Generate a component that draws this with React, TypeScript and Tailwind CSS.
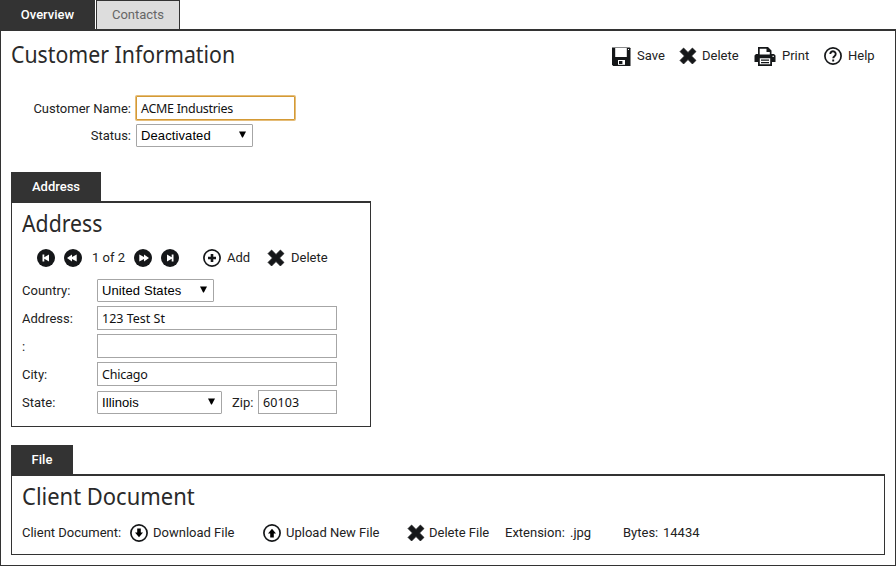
import type { ReactNode } from "react";

const head = "font-['Noto_Sans',sans-serif] text-[24px] leading-[30px] tracking-normal text-[#2a2a2a] whitespace-nowrap origin-left";

function Cross() {
  return (
    <svg width="18" height="18" viewBox="0 0 18 18" className="shrink-0">
      <path d="M4.6 1 9 5.4 13.4 1 17 4.6 12.6 9 17 13.4 13.4 17 9 12.6 4.6 17 1 13.4 5.4 9 1 4.6Z" fill="#151719" stroke="#151719" strokeWidth=".7" strokeLinejoin="round" />
    </svg>
  );
}

function Ring({ children }: { children: ReactNode }) {
  return (
    <svg width="18" height="18" viewBox="0 0 18 18" className="shrink-0">
      <circle cx="9" cy="9" r="8.1" fill="#fff" stroke="#151719" strokeWidth="1.7" />
      {children}
    </svg>
  );
}

function Nav({ d }: { d: string }) {
  return (
    <svg width="18" height="18" viewBox="0 0 18 18" className="shrink-0">
      <circle cx="9" cy="9" r="9" fill="#151719" />
      <path d={d} fill="#fff" />
    </svg>
  );
}

function SaveIcon() {
  return (
    <svg width="19" height="19" viewBox="0 0 19 19" className="shrink-0">
      <path d="M0 .5h17.8l.7.7V19H1.2L0 17.8Z" fill="#151719" />
      <path d="M3.2 1h11.6v9H3.2Z" fill="#fff" />
      <path d="M6 13h7v4.8H6Z" fill="#fff" />
      <path d="M7 14h3.4v3H7Z" fill="#151719" />
      <path d="M16 2h1v1h-1Z" fill="#fff" />
    </svg>
  );
}

function PrintIcon() {
  return (
    <svg width="22" height="19" viewBox="0 0 22 19" className="shrink-0">
      <path d="M4 0h10l3.5 3.5V7H20l1.5 1.5V15H18v4H4v-4H.5V8.5L2 7h2Z" fill="#151719" />
      <path d="M5.7 1.7H12.5V5h3.3v2.5H5.7ZM5.8 11.3h10.4v6H5.8Z" fill="#fff" />
      <path d="M7 12.6h8v1.2H7ZM7 15h8v1.2H7Z" fill="#151719" />
      <path d="M18.5 8.8h1.3V10h-1.3Z" fill="#fff" />
    </svg>
  );
}

function Select({ value, className }: { value: string; className: string }) {
  return (
    <div className={"flex h-[23px] items-center justify-between rounded-[1px] border border-[#a6a6a6] bg-white pl-1 pr-[6px] font-['Liberation_Sans',sans-serif] text-[13px] leading-[15px] text-black " + className}>
      <span>{value}</span>
      <svg width="7" height="7" viewBox="0 0 7 7" className="mb-[2px]"><path d="M0 .5h7L3.9 6.5h-.8Z" fill="#000" /></svg>
    </div>
  );
}

function Input({ value, className, focus = false }: { value: string; className: string; focus?: boolean }) {
  return (
    <div className={"flex h-6 items-center bg-white pl-1 pt-px font-['Noto_Sans',sans-serif] text-[12.5px] text-[#111] " + (focus ? "rounded-[1px] border border-[#d49a35] ring-1 ring-[#e5bd79] " : "border border-[#a6a6a6] ") + className}>
      {value}
    </div>
  );
}

function Row({ label, children }: { label: string; children: ReactNode }) {
  return (
    <div className="flex h-7 items-center">
      <span className="w-[75px] pt-[2px]">{label}</span>
      {children}
    </div>
  );
}

export default function App() {
  return (
    <div className="flex h-[566px] w-[896px] flex-col bg-white font-[Roboto,sans-serif] text-[13px] leading-[16px] tracking-normal whitespace-nowrap text-[#222]">
      <div className="flex h-[29px] shrink-0 gap-px">
        <div className="flex w-[95px] items-center justify-center bg-[#333] font-medium text-white">Overview</div>
        <div className="flex w-[84px] items-center justify-center border border-b-0 border-[#333] bg-[#ddd] text-[#666]">Contacts</div>
      </div>
      <main className="flex grow flex-col border border-t-2 border-[#333] px-[10px]">
        <header className="mt-[9px] flex h-[30px] items-center">
          <h1 className={head + " -mt-[2px] w-[601px] scale-x-[0.887]"}>Customer Information</h1>
          <div className="mt-[2px] flex items-center">
            <div className="flex w-[67px] items-center gap-[6px]"><SaveIcon /><span>Save</span></div>
            <div className="flex w-[75px] items-center gap-[5px]"><Cross /><span>Delete</span></div>
            <div className="flex w-[70px] items-center gap-[6px]"><PrintIcon /><span>Print</span></div>
            <div className="flex items-center gap-[6px]">
              <Ring><path d="M6.3 7a2.7 2.7 0 1 1 4.2 2.2C9.4 10 9.2 10.2 9.2 11.2M9.2 12.4v2" fill="none" stroke="#151719" strokeWidth="1.9" /></Ring>
              <span>Help</span>
            </div>
          </div>
        </header>
        <section className="mt-[26px] flex h-[52px] flex-col gap-1">
          <div className="flex h-6 items-center"><span className="mr-[5px] w-[120px] pt-[2px] text-right">Customer Name:</span><Input value="ACME Industries" className="w-[159px] tracking-[-0.3px]" focus /></div>
          <div className="flex h-[23px] items-center"><span className="mr-[5px] w-[120px] text-right">Status:</span><Select value="Deactivated" className="w-[117px] tracking-[0.1px]" /></div>
        </section>
        <div className="mt-[24px] flex h-[29px] w-[90px] shrink-0 items-center justify-center bg-[#333] font-medium text-white">Address</div>
        <section className="h-[226px] w-[360px] shrink-0 border border-t-2 border-[#333] px-[10px] pt-[5px]">
          <h2 className={head + " scale-x-[0.885]"}>Address</h2>
          <div className="mt-[11px] flex h-[18px] items-center pl-[15px]">
            <Nav d="M5.5 5.5h1.8v2.7L12 5.5v7L7.3 9.8v2.7H5.5Z" />
            <div className="ml-[9px] flex"><Nav d="M3 9l5-3.5v2.4l4.7-2.4v7L8 10.1v2.4Z" /></div>
            <span className="ml-[10px] w-[33px]">1 of 2</span>
            <div className="ml-[9px] flex"><Nav d="M15 9l-5-3.5v2.4L5.3 5.5v7L10 10.1v2.4Z" /></div>
            <div className="ml-[9px] flex"><Nav d="M12.5 5.5h-1.8v2.7L6 5.5v7l4.7-2.7v2.7h1.8Z" /></div>
            <div className="ml-[24px] flex w-[64px] items-center gap-[6px]"><Ring><path d="M7.7 5h2.6v2.7H13v2.6h-2.7V13H7.7v-2.7H5V7.7h2.7Z" fill="#151719" /></Ring><span>Add</span></div>
            <div className="flex items-center gap-[6px]"><Cross /><span>Delete</span></div>
          </div>
          <div className="mt-[9px]">
            <Row label="Country:"><Select value="United States" className="w-[117px] tracking-[0.1px]" /></Row>
            <Row label="Address:"><Input value="123 Test St" className="w-[240px]" /></Row>
            <Row label=":"><Input value="" className="w-[240px]" /></Row>
            <Row label="City:"><Input value="Chicago" className="w-[240px] tracking-[-0.2px]" /></Row>
            <Row label="State:">
              <Select value="Illinois" className="w-[125px] tracking-[0.1px]" />
              <span className="ml-[10px] w-[26px] pt-[2px]">Zip:</span>
              <Input value="60103" className="w-[79px] tracking-[0.1px]" />
            </Row>
          </div>
        </section>
        <div className="mt-[18px] flex h-[29px] w-[62px] shrink-0 items-center justify-center bg-[#333] font-medium text-white">File</div>
        <section className="h-[81px] shrink-0 border border-t-2 border-[#333] px-[10px] pt-[5px]">
          <h2 className={head + " scale-x-[0.915]"}>Client Document</h2>
          <div className="mt-[13px] flex h-[18px] items-center">
            <span className="w-[108px]">Client Document:</span>
            <div className="flex w-[133px] items-center gap-[5px]"><Ring><path d="M7.2 4.5h3.6v4H13L9 13.3 5 8.5h2.2Z" fill="#000" /></Ring><span>Download File</span></div>
            <div className="flex w-[144px] items-center gap-[5px]"><Ring><path d="M7.2 13.5h3.6v-4H13L9 4.7 5 9.5h2.2Z" fill="#000" /></Ring><span>Upload New File</span></div>
            <div className="flex w-[98px] items-center gap-[4px]"><Cross /><span>Delete File</span></div>
            <span className="w-[65px]">Extension:</span><span className="w-[53px]">.jpg</span>
            <span className="w-[40px]">Bytes:</span><span>14434</span>
          </div>
        </section>
      </main>
    </div>
  );
}
